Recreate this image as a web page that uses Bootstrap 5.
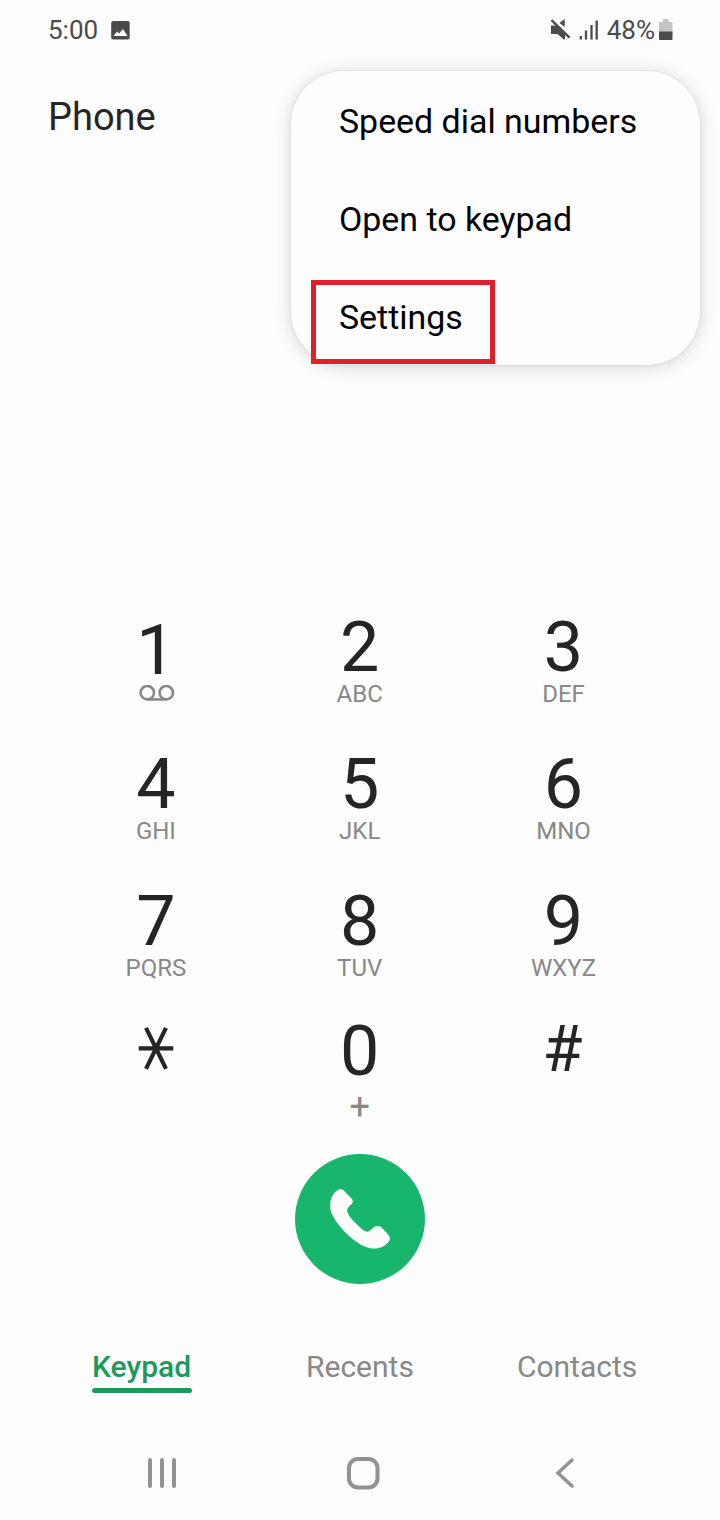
<!DOCTYPE html>
<html lang="en">
<head>
<meta charset="utf-8">
<meta name="viewport" content="width=device-width, initial-scale=1">
<title>Phone</title>
<link href="https://cdn.jsdelivr.net/npm/bootstrap@5.3.0/dist/css/bootstrap.min.css" rel="stylesheet">
<style>
  body { font-family: Roboto, "Liberation Sans", sans-serif; background: #fdfdfd; color: #252525; }
  .screen { width: 720px; height: 1520px; overflow: hidden; }
  svg { display: block; flex: none; }
  .status { height: 60px; padding: 0 47px 0 48px; font-size: 26px; color: #4a4a4a; }
  .photo { margin-left: 13px; }
  .title { font-size: 38px; line-height: 48px; padding-left: 48px; margin-top: 33px; height: 519px; }
  .options { left: 291px; top: 71px; width: 409px; height: 294px; border-radius: 53px; background: #fdfdfd;
    box-shadow: 0 0 3px rgba(0,0,0,.1), 0 2px 18px rgba(0,0,0,.16); padding-top: 2px; }
  .option { height: 98px; line-height: 98px; font-size: 33.900px; color: #000; padding-left: 48px; }
  .callout { left: 20px; top: 209px; width: 184px; height: 84px; border: 5px solid #df202c; }
  .keypad { padding: 0 54.600px 0 54px; }
  .key { height: 137px; }
  .key.short { height: 130px; }
  .digit { font-size: 70px; line-height: 70px; }
  .digit.lowered { padding-top: 3px; }
  .letters { font-size: 24px; line-height: 28px; margin-top: -2px; color: #888; }
  .plus { font-size: 36px; line-height: 42px; color: #888; }
  .hash { font-size: 65px; line-height: 70px; margin-top: -2px; padding-right: 2px; }
  .dial { width: 130px; height: 130px; background: #18b66d; margin-top: 1px; }
  .tabs { margin-top: 64px; height: 70px; font-size: 30px; line-height: 38px; color: #888; }
  .tab-on { color: #1c9a5a; font-weight: 500; width: 100px; height: 45px; }
  .tab-on::after { content: ""; display: block; height: 5px; border-radius: 3px; background: #1c9a5a; margin-top: 2px; }
</style>
</head>
<body>
<div class="screen position-relative">
  <header class="status d-flex align-items-center">
    <span>5:00</span>
    <svg class="photo me-auto" width="19" height="19" viewBox="0 0 19 19"><rect width="18.500" height="18.500" x=".2" rx="2" fill="#4a4a4a"/><path d="M2.500 15 6 10.500l2 2 4-4.500 4.500 7z" fill="#fdfdfd"/></svg>
    <svg width="20" height="22" viewBox="0 0 20 22"><path d="M0 6.500H5l9 9V20.500h-1.200L6.500 15H0zM13.700 0v8L8.500 4z" fill="#4a4a4a"/><path d="m.5 1 18 17.700" stroke="#4a4a4a" stroke-width="2.400"/></svg>
    <svg class="ms-2" width="20" height="20" viewBox="0 0 20 20"><path d="M1.800 16v3.500M7 10.500v9M12.500 5v14.500M17.700.5v19" stroke="#4a4a4a" stroke-width="2.300"/></svg>
    <span class="ms-2">48%</span>
    <svg class="ms-1" width="14" height="22" viewBox="0 0 14 22"><path d="M4 0h5.500v3H13.500v10H0V3h4z" fill="#c4c4c4"/><path d="M0 12.500h13.500V20q0 1-1 1H1q-1 0-1-1z" fill="#4a4a4a"/></svg>
  </header>

  <h1 class="title fw-normal mb-0">Phone</h1>

  <main>
    <div class="keypad">
      <div class="row g-0 text-center">
        <div class="col-4 key">
          <div class="digit lowered">1</div>
          <svg class="mx-auto" width="38" height="17" viewBox="-2 1 38 17" fill="none" stroke="#888" stroke-width="2.600"><circle cx="8.300" cy="8.700" r="6.700"/><circle cx="27.300" cy="8.700" r="6.700"/><path d="M8.300 15.400h19"/></svg>
        </div>
        <div class="col-4 key"><div class="digit">2</div><div class="letters">ABC</div></div>
        <div class="col-4 key"><div class="digit">3</div><div class="letters">DEF</div></div>
        <div class="col-4 key"><div class="digit">4</div><div class="letters">GHI</div></div>
        <div class="col-4 key"><div class="digit">5</div><div class="letters">JKL</div></div>
        <div class="col-4 key"><div class="digit">6</div><div class="letters">MNO</div></div>
        <div class="col-4 key short"><div class="digit">7</div><div class="letters">PQRS</div></div>
        <div class="col-4 key short"><div class="digit">8</div><div class="letters">TUV</div></div>
        <div class="col-4 key short"><div class="digit">9</div><div class="letters">WXYZ</div></div>
        <div class="col-4 key">
          <svg class="mx-auto" width="36" height="66" viewBox="0 0 36 66" stroke="#252525" stroke-width="4.200"><path d="M.7 32.300h34.600M8 11.800l20 41M28 11.800l-20 41"/></svg>
        </div>
        <div class="col-4 key"><div class="digit">0</div><div class="plus">+</div></div>
        <div class="col-4 key"><div class="hash">#</div></div>
      </div>
    </div>
    <div class="dial rounded-circle mx-auto">
      <svg width="130" height="130" viewBox="45 42 390 390"><path fill="#fafdfb" d="M170 152Q182 142 192 152L215 176Q222 184 215 192Q202 202 201 212C203 225 225 250 245 266Q258 279 268 273Q275 268 282 261Q294 254 304 262L324 283Q333 293 328 302C315 322 290 330 265 323C230 315 170 260 153 215C146 190 153 165 170 152Z"/></svg>
    </div>
  </main>

  <nav class="tabs d-flex">
    <div class="tab-on" style="margin-left:92px">Keypad</div>
    <div style="margin-left:114px">Recents</div>
    <div style="margin-left:103px">Contacts</div>
  </nav>

  <footer class="d-flex align-items-center" style="margin-top:38px">
    <svg style="margin-left:147px" width="30" height="34" viewBox="0 0 30 34"><path d="M3 4v26M15 4v26M27 4v26" stroke="#929292" stroke-width="4" stroke-linecap="round"/></svg>
    <svg style="margin-left:169px" width="34" height="34" viewBox="0 0 34 34"><rect x="3" y="3" width="28.500" height="28.500" rx="9" fill="none" stroke="#929292" stroke-width="4"/></svg>
    <svg style="margin-left:174px" width="22" height="34" viewBox="0 0 22 34"><path d="M18 4 4 17l14 13" fill="none" stroke="#929292" stroke-width="3.500" stroke-linecap="round"/></svg>
  </footer>

  <div class="options position-absolute">
    <div class="option">Speed dial numbers</div>
    <div class="option">Open to keypad</div>
    <div class="option">Settings</div>
    <div class="callout position-absolute"></div>
  </div>
</div>
<script src="https://cdn.jsdelivr.net/npm/bootstrap@5.3.0/dist/js/bootstrap.bundle.min.js"></script>
</body>
</html>
